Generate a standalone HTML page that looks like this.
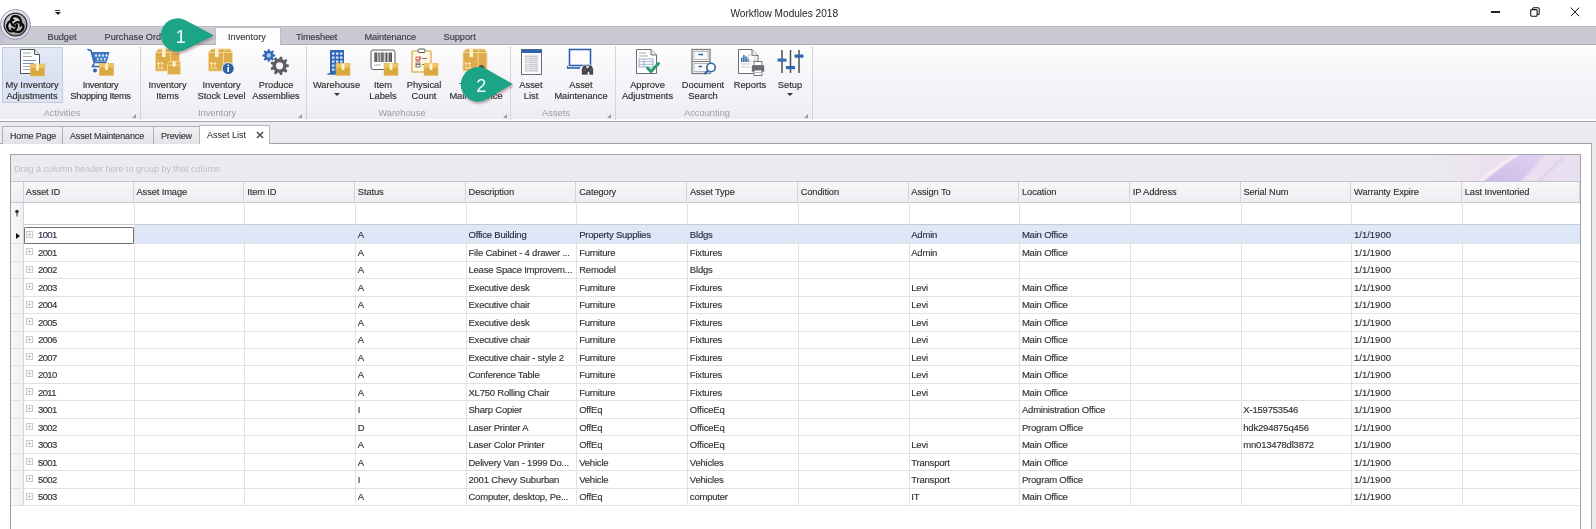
<!DOCTYPE html>
<html><head><meta charset="utf-8">
<style>
*{margin:0;padding:0;box-sizing:border-box}
html{background:#fff}
html,body{width:1596px;height:529px;overflow:hidden;font-family:"Liberation Sans",sans-serif;color:#333;position:relative}
.ct,.ht,.btxt,.rt,.dt span{-webkit-text-stroke:0.15px currentColor}
#wrap{position:absolute;left:0;top:0;width:1596px;height:529px;will-change:transform}
.a{position:absolute}
.t{position:absolute;white-space:nowrap;font-size:9.3px;line-height:11px}
svg{position:absolute;overflow:visible}
#tabbar{left:0;top:26px;width:1596px;height:19px;background:#c9c9d2;border-top:1px solid #b9b9c1;border-bottom:1px solid #aeaeb6}
.rt{position:absolute;top:31.7px;font-size:9.2px;line-height:11px;color:#3c3c44;white-space:nowrap}
#ribbon{left:0;top:45px;width:1596px;height:77px;background:linear-gradient(#fdfdfe,#f4f4f8 50%,#eeeff4 97%,#fafbfd 97%);border-bottom:1px solid #a8a8b0}
#glstrip{left:0;top:104px;width:813px;height:15px;background:linear-gradient(#f2f2f6,#ebebf0)}
.sep{position:absolute;top:46px;width:1px;height:74px;background:#d4d4da}
.glbl{position:absolute;top:108px;font-size:9.3px;line-height:11px;color:#9c9ca4;white-space:nowrap;transform:translateX(-50%)}
.btxt{position:absolute;font-size:9.3px;line-height:10.2px;color:#2e2e2e;text-align:center;white-space:nowrap;transform:translateX(-50%)}
.launch{position:absolute;top:114px;width:0;height:0;border-left:4px solid transparent;border-bottom:4px solid #9a9aa2}
#doctabs{left:0;top:122px;width:1596px;height:22px;background:#ebebef;border-bottom:1px solid #a2a2aa}
.dt{position:absolute;top:126px;height:18px;background:linear-gradient(#f0f0f3,#e3e3e8);border:1px solid #b0b0b8;border-bottom:none;font-size:9px;line-height:15px;color:#3a3a3a;white-space:nowrap}
.dt span{position:absolute;top:2px;letter-spacing:-0.15px}
/* grid */
#docarea{left:0;top:144px;width:1592px;height:385px;background:#fff;border-right:1px solid #a8a8b0}
#grid{left:10px;top:154px;width:1571px;height:375px;border-left:1px solid #9c9ca4;border-top:1px solid #a4a4ac;border-right:1px solid #a2a2aa}
#grp{left:11px;top:155px;width:1569px;height:27px;background:#ebebef;border-bottom:1px solid #c4c4cc}
.hc{position:absolute;top:182px;height:21px;background:linear-gradient(#f7f7f9,#eeeef2);border-right:1px solid #d4d4da;border-bottom:1px solid #c8c8d0}
.ht{position:absolute;top:187px;font-size:9.3px;line-height:11px;color:#333;white-space:nowrap;letter-spacing:-0.1px}
.vl{position:absolute;width:1px;background:#e2e2e6}
.hl{position:absolute;height:1px;background:#e0e0e5}
.ct{position:absolute;font-size:9.5px;line-height:11px;color:#333;white-space:nowrap;letter-spacing:-0.2px}
.num{letter-spacing:-0.6px}
.exp{position:absolute;width:7px;height:7px;border:1px solid #c8c8ce;background:#fbfbfc}
.exp:before{content:"";position:absolute;left:1px;top:2px;width:3px;height:1px;background:#c0c0c8}
.exp:after{content:"";position:absolute;left:2px;top:1px;width:1px;height:3px;background:#c0c0c8}
</style></head>
<body><div id="wrap">
<div class="t" style="left:730.5px;top:6.6px;font-size:10.1px;line-height:13px;color:#1e1e1e">Workflow Modules 2018</div>
<!-- window controls -->
<div class="a" style="left:1491px;top:11.4px;width:8.7px;height:1.3px;background:#222"></div>
<svg style="left:1529.5px;top:6.8px" width="10" height="10" viewBox="0 0 10 10"><rect x="0.7" y="2.6" width="6.4" height="6.6" rx="1" fill="none" stroke="#111" stroke-width="1.05"/><path d="M2.6 2.6V1.8a1 1 0 0 1 1-1h4.6a1 1 0 0 1 1 1v4.6a1 1 0 0 1-1 1h-1" fill="none" stroke="#111" stroke-width="1.05"/></svg>
<svg style="left:1569.5px;top:6.8px" width="10" height="10" viewBox="0 0 10 10"><path d="M0.8 0.6L9.2 9.2M9.2 0.6L0.8 9.2" stroke="#111" stroke-width="1"/></svg>
<!-- QAT arrow -->
<div class="a" style="left:55px;top:10px;width:5px;height:1px;background:#333"></div>
<div class="a" style="left:54.5px;top:12px;width:0;height:0;border-left:3px solid transparent;border-right:3px solid transparent;border-top:3.5px solid #222"></div>

<div id="tabbar" class="a"></div>
<div class="rt" style="left:47.5px">Budget</div>
<div class="rt" style="left:104.5px">Purchase Orders</div>
<div class="a" style="left:215px;top:27px;width:66px;height:19px;background:linear-gradient(#fbfbfc,#fff);border:1px solid #bcbcc4;border-bottom:none"></div>
<div class="rt" style="left:228px">Inventory</div>
<div class="rt" style="left:296px;letter-spacing:-0.15px">Timesheet</div>
<div class="rt" style="left:364.5px;letter-spacing:-0.1px">Maintenance</div>
<div class="rt" style="left:443.5px">Support</div>

<!-- logo -->
<div class="a" style="left:0;top:27px;width:8px;height:17px;background:linear-gradient(90deg,#c4bbd6,#c9c9d2)"></div>
<svg style="left:-1px;top:8px" width="33" height="33" viewBox="0 0 32 33">
<defs><radialGradient id="lg1" cx="0.4" cy="0.35" r="0.7"><stop offset="0" stop-color="#e4e4e4"/><stop offset="0.6" stop-color="#b8b8b8"/><stop offset="1" stop-color="#8e8e8e"/></radialGradient>
<linearGradient id="lg0" x1="0" y1="0" x2="1" y2="1"><stop offset="0" stop-color="#f4f2f8"/><stop offset="1" stop-color="#d2cadf"/></linearGradient></defs>
<circle cx="16" cy="16.5" r="15" fill="url(#lg0)" stroke="#9d95ae" stroke-width="1"/>
<circle cx="16" cy="16.5" r="12" fill="#26262a"/>
<circle cx="16" cy="16.5" r="10.8" fill="url(#lg1)"/>
<g transform="translate(15.8 16.8) scale(1.1)" fill="none" stroke="#0a0a0a" stroke-width="2" stroke-linecap="round">
<path d="M-0.5 1.2C-5 0, -5 -7.8, 0 -7.8C4.5 -7.8, 6.5 -3, 4.6 0.8"/>
<path d="M-0.5 1.2C-5 0, -5 -7.8, 0 -7.8C4.5 -7.8, 6.5 -3, 4.6 0.8" transform="rotate(120)"/>
<path d="M-0.5 1.2C-5 0, -5 -7.8, 0 -7.8C4.5 -7.8, 6.5 -3, 4.6 0.8" transform="rotate(240)"/>
</g>
</svg>
<svg width="0" height="0" style="position:absolute">
<defs>
<g id="box">
<rect x="0" y="0.5" width="14" height="12" fill="#d9a841"/>
<rect x="0" y="0.5" width="14" height="4" fill="#efc467"/>
<rect x="0" y="0.5" width="14" height="12" fill="none" stroke="#e6b95a" stroke-width="0.6"/>
<rect x="5.6" y="0.5" width="2.8" height="6.5" fill="#fff4d4"/>
</g>
<g id="bigbox">
<path d="M0.5 4L3.5 0.5H22L24.5 4V22.5H0.5Z" fill="#deac4a" stroke="#f5d99a" stroke-width="0.9"/>
<path d="M0.5 4H24.5" stroke="#f6dca0" stroke-width="0.9"/>
<path d="M17.5 0.5L15.5 4V22.5" fill="none" stroke="#f5d99a" stroke-width="0.9"/>
<rect x="7" y="0.5" width="3.5" height="8" fill="#fff3cf"/>
<path d="M3.5 18V14M2 15.5L3.5 14L5 15.5M7 18V14M5.5 15.5L7 14L8.5 15.5M2 19.5H9" fill="none" stroke="#fff3cf" stroke-width="0.9"/>
</g>
</defs>
</svg>
<div id="ribbon" class="a"></div>
<div id="glstrip" class="a"></div>
<!-- the inventory tab joins ribbon -->
<div class="a" style="left:216px;top:44px;width:64px;height:2px;background:#fefefe"></div>

<!-- separators -->
<div class="sep" style="left:140px"></div>
<div class="sep" style="left:306px"></div>
<div class="sep" style="left:510px"></div>
<div class="sep" style="left:615px"></div>
<div class="sep" style="left:812px"></div>

<!-- pressed button -->
<div class="a" style="left:2px;top:47px;width:61px;height:56px;background:linear-gradient(#e2e8f6,#d9e1f2 60%,#dfe5f3);border:1px solid #c2cade"></div>

<!-- group labels -->
<div class="glbl" style="left:62px">Activities</div>
<div class="glbl" style="left:217px">Inventory</div>
<div class="glbl" style="left:402px">Warehouse</div>
<div class="glbl" style="left:556px">Assets</div>
<div class="glbl" style="left:707px">Accounting</div>
<div class="launch" style="left:132px"></div>
<div class="launch" style="left:298px"></div>
<div class="launch" style="left:503px"></div>
<div class="launch" style="left:607px"></div>
<div class="launch" style="left:804px"></div>

<!-- button texts -->
<div class="btxt" style="left:32px;top:80.4px">My Inventory<br>Adjustments</div>
<div class="btxt" style="left:100.5px;top:80.4px;letter-spacing:-0.3px">Inventory<br>Shopping Items</div>
<div class="btxt" style="left:167.5px;top:80.4px">Inventory<br>Items</div>
<div class="btxt" style="left:221.5px;top:80.4px">Inventory<br>Stock Level</div>
<div class="btxt" style="left:276px;top:80.4px">Produce<br>Assemblies</div>
<div class="btxt" style="left:336.5px;top:80.4px">Warehouse</div>
<div class="a" style="left:333.5px;top:92.5px;width:0;height:0;border-left:3px solid transparent;border-right:3px solid transparent;border-top:3.5px solid #333"></div>
<div class="btxt" style="left:383px;top:80.4px">Item<br>Labels</div>
<div class="btxt" style="left:424px;top:80.4px">Physical<br>Count</div>
<div class="t" style="left:459px;top:80.6px;font-size:9.3px;line-height:10px;color:#2e2e2e">Tool</div>
<div class="btxt" style="left:476px;top:90.6px">Maintenance</div>
<div class="btxt" style="left:531px;top:80.4px">Asset<br>List</div>
<div class="btxt" style="left:581px;top:80.4px">Asset<br>Maintenance</div>
<div class="btxt" style="left:647.5px;top:80.4px">Approve<br>Adjustments</div>
<div class="btxt" style="left:703px;top:80.4px">Document<br>Search</div>
<div class="btxt" style="left:750px;top:80.4px">Reports</div>
<div class="btxt" style="left:790px;top:80.4px">Setup</div>
<div class="a" style="left:787px;top:92.5px;width:0;height:0;border-left:3px solid transparent;border-right:3px solid transparent;border-top:3.5px solid #333"></div>

<!-- icons -->
<!-- My Inventory Adjustments: document + box -->
<svg style="left:20px;top:49px" width="26" height="28" viewBox="0 0 26 28">
<path d="M0.5 0.5H14.5L19.5 5.5V24.5H0.5Z" fill="#fff" stroke="#55565a" stroke-width="1"/>
<path d="M14.5 0.5V5.5H19.5" fill="#e8e8ea" stroke="#55565a" stroke-width="1"/>
<path d="M3 4H11M3 7.5H12M3 11.5H16M3 14.5H14M3 17.5H16M3 20.5H14" stroke="#a9a9ad" stroke-width="1"/>
<path d="M3 11.5H16M3 14.5H14" stroke="#6f8fc0" stroke-width="1"/>
<use href="#box" x="10.5" y="14.5"/>
</svg>
<!-- cart -->
<svg style="left:87px;top:48px" width="28" height="28" viewBox="0 0 28 28">
<path d="M1 1.5L4 2.5L7.2 14.5H19" fill="none" stroke="#2f63ad" stroke-width="1.6" stroke-linecap="round"/>
<path d="M5 4H22.5L20 13.5H7Z" fill="#3a72bf"/>
<g fill="#d5e4f7">
<path d="M9 5.5l1.3 2-1.3 2-1.3-2z"/><path d="M12.5 5.5l1.3 2-1.3 2-1.3-2z"/><path d="M16 5.5l1.3 2-1.3 2-1.3-2z"/><path d="M19.5 5.5l1.3 2-1.3 2-1.3-2z"/>
<path d="M10.8 9.3l1.2 1.8-1.2 1.8-1.2-1.8z"/><path d="M14.3 9.3l1.2 1.8-1.2 1.8-1.2-1.8z"/><path d="M17.8 9.3l1.2 1.8-1.2 1.8-1.2-1.8z"/>
</g>
<path d="M7 15.5L5.5 18.5H14" fill="none" stroke="#2f63ad" stroke-width="1.6"/>
<circle cx="8" cy="22.5" r="2" fill="#2f63ad"/>
<use href="#box" x="12.5" y="15"/>
</svg>
<!-- Inventory Items -->
<svg style="left:155px;top:48px" width="28" height="28" viewBox="0 0 28 28">
<use href="#bigbox" x="0" y="0.5"/>
<path d="M12.5 15.5L14.5 13.5H25.5V26.5H12.5Z" fill="#deac4a" stroke="#f5d99a" stroke-width="0.9"/>
<path d="M12.5 17H25.5" stroke="#f6dca0" stroke-width="0.8"/>
<rect x="17.5" y="13.5" width="3" height="5" fill="#fff3cf"/>
</svg>
<!-- Stock level -->
<svg style="left:208px;top:48px" width="28" height="28" viewBox="0 0 28 28">
<use href="#bigbox" x="0" y="0.5"/>
<circle cx="20.2" cy="20.6" r="6" fill="#2f62a8" stroke="#fff" stroke-width="0.9"/>
<rect x="19.4" y="19" width="1.6" height="5" fill="#fff"/>
<circle cx="20.2" cy="17.3" r="0.9" fill="#fff"/>
</svg>
<!-- Produce Assemblies gears -->
<svg style="left:260px;top:47px" width="30" height="30" viewBox="0 0 30 30">
<g transform="translate(8.8 8.5)">
<path d="M4.46 -1.14L6.32 -1.00L6.32 1.00L4.46 1.14L3.96 2.34L5.18 3.76L3.76 5.18L2.34 3.96L1.14 4.46L1.00 6.32L-1.00 6.32L-1.14 4.46L-2.34 3.96L-3.76 5.18L-5.18 3.76L-3.96 2.34L-4.46 1.14L-6.32 1.00L-6.32 -1.00L-4.46 -1.14L-3.96 -2.34L-5.18 -3.76L-3.76 -5.18L-2.34 -3.96L-1.14 -4.46L-1.00 -6.32L1.00 -6.32L1.14 -4.46L2.34 -3.96L3.76 -5.18L5.18 -3.76L3.96 -2.34Z" fill="#2e66b4"/>
<circle r="2.2" fill="#a9c9ee"/>
</g>
<g transform="translate(19.6 18.8)">
<path d="M6.83 -1.55L9.21 -1.29L9.21 1.29L6.83 1.55L6.23 3.20L7.89 4.93L6.22 6.91L4.23 5.58L2.71 6.45L2.87 8.84L0.32 9.29L-0.34 6.99L-2.07 6.69L-3.48 8.62L-5.73 7.33L-4.76 5.14L-5.88 3.79L-8.21 4.37L-9.10 1.93L-6.94 0.88L-6.94 -0.88L-9.10 -1.93L-8.21 -4.37L-5.88 -3.79L-4.76 -5.14L-5.73 -7.33L-3.48 -8.62L-2.07 -6.69L-0.34 -6.99L0.32 -9.29L2.87 -8.84L2.71 -6.45L4.23 -5.58L6.22 -6.91L7.89 -4.93L6.23 -3.20Z" fill="#5c5d62"/>
<circle r="3.6" fill="#f6f6f8"/>
</g>
</svg>
<!-- Warehouse building -->
<svg style="left:327px;top:49px" width="26" height="28" viewBox="0 0 26 28">
<rect x="3" y="1" width="14" height="24" fill="#2f66b3"/>
<path d="M0.5 25H18" stroke="#2f66b3" stroke-width="1.5"/>
<g fill="#d6e6f8">
<rect x="5" y="3.5" width="2.5" height="2.2"/><rect x="9" y="3.5" width="2.5" height="2.2"/><rect x="13" y="3.5" width="2.5" height="2.2"/>
<rect x="5" y="7.5" width="2.5" height="2.2"/><rect x="9" y="7.5" width="2.5" height="2.2"/><rect x="13" y="7.5" width="2.5" height="2.2"/>
<rect x="5" y="11.5" width="2.5" height="2.2"/><rect x="9" y="11.5" width="2.5" height="2.2"/><rect x="13" y="11.5" width="2.5" height="2.2"/>
<rect x="5" y="15.5" width="2.5" height="2.2"/><rect x="9" y="15.5" width="2.5" height="2.2"/>
<rect x="5" y="19.5" width="2.5" height="2.2"/>
</g>
<use href="#box" x="9" y="14"/>
</svg>
<!-- Item labels barcode -->
<svg style="left:370px;top:49px" width="30" height="28" viewBox="0 0 30 28">
<rect x="1" y="1" width="24" height="19.5" rx="2.2" fill="#fff" stroke="#5a5b60" stroke-width="1"/>
<path d="M4.8 3.5V13M6.6 3.5V13M9.8 3.5V13M13.2 3.5V13M16.6 3.5V13M19.6 3.5V13M21.5 3.5V13" stroke="#222" stroke-width="0.8"/>
<path d="M5.6 3.5V13M8.2 3.5V13M11.4 3.5V13M12.3 3.5V13M15.2 3.5V13M18 3.5V13M20.6 3.5V13" stroke="#555" stroke-width="0.9"/>
<path d="M4.5 16H11" stroke="#777" stroke-width="1" stroke-dasharray="1 0.6"/>
<use href="#box" x="14" y="14"/>
</svg>
<!-- Physical count clipboard -->
<svg style="left:411px;top:48px" width="30" height="29" viewBox="0 0 30 29">
<rect x="1" y="3" width="19" height="21" rx="1" fill="#fff8e6" stroke="#e4b865" stroke-width="1.6"/>
<rect x="7" y="1" width="7" height="3.5" rx="1" fill="#fff" stroke="#58595d" stroke-width="1"/>
<path d="M5 9h4v4h-4z" fill="none" stroke="#c04a4a" stroke-width="0.9"/>
<path d="M5.5 11l1.5 1.5 3-4" fill="none" stroke="#c04a4a" stroke-width="1"/>
<path d="M11 10.5H16M5 16.5H9M11 16.5H15" stroke="#777" stroke-width="1"/>
<rect x="5" y="15" width="4" height="4" fill="none" stroke="#666" stroke-width="0.9"/>
<use href="#box" x="13" y="15"/>
</svg>
<!-- Tool maintenance big boxes -->
<svg style="left:462px;top:48px" width="28" height="28" viewBox="0 0 28 28">
<use href="#bigbox" x="0.5" y="0.5"/>
<path d="M16 20l2-3h3l2 3v3h-7z" fill="#555"/>
</svg>
<!-- Asset List -->
<svg style="left:521px;top:49px" width="22" height="27" viewBox="0 0 22 27">
<rect x="0.5" y="0.5" width="20" height="25" fill="#fbfbfc" stroke="#6b6c72" stroke-width="1"/>
<rect x="0.5" y="0.5" width="20" height="3.5" fill="#2f64ad"/>
<rect x="4" y="6.5" width="13" height="16" fill="#c6c7cb"/>
<path d="M4 8.5H17M4 10.5H17M4 12.5H17M4 14.5H17M4 16.5H17M4 18.5H17M4 20.5H17" stroke="#f4f4f6" stroke-width="0.8"/>
<path d="M7 6.5V22.5" stroke="#f4f4f6" stroke-width="0.8"/>
</svg>
<!-- Asset Maintenance monitor -->
<svg style="left:566px;top:48px" width="32" height="30" viewBox="0 0 32 30">
<rect x="3.5" y="1.5" width="21" height="16" fill="#fdfdfe" stroke="#2e62ad" stroke-width="1.6"/>
<path d="M1 20H14" stroke="#2e62ad" stroke-width="1.6"/>
<path d="M1.5 20v-2" stroke="#2e62ad" stroke-width="1.2"/>
<path d="M15.5 27v-6l2-4h2.5l1 3h1l1-3h2.5l2 4v6h-4.5v-3h-1v3z" fill="#45464b" stroke="#fff" stroke-width="0.6"/>
<path d="M17.5 22H20M24 22H26.5" stroke="#888" stroke-width="0.8"/>
</svg>
<!-- Approve Adjustments -->
<svg style="left:636px;top:48px" width="28" height="28" viewBox="0 0 28 28">
<path d="M0.5 1.5H15L20.5 7V25.5H0.5Z" fill="#fff" stroke="#6c6d72" stroke-width="1"/>
<path d="M15 1.5V7H20.5" fill="#ececee" stroke="#6c6d72" stroke-width="1"/>
<path d="M3 5H10M3 8H12" stroke="#a9a9ad" stroke-width="1"/>
<rect x="3" y="11" width="14" height="8" fill="#fff" stroke="#8fa6c8" stroke-width="0.9"/>
<path d="M3 13.7H17M3 16.3H17M8 11V19" stroke="#8fa6c8" stroke-width="0.8"/>
<path d="M11.5 20l3.5 3.5 7.5-8" fill="none" stroke="#2e9b6e" stroke-width="3" stroke-linecap="round"/>
</svg>
<!-- Document Search -->
<svg style="left:691px;top:48px" width="28" height="28" viewBox="0 0 28 28">
<rect x="1" y="1.5" width="18" height="24" fill="#fafafb" stroke="#7b7c80" stroke-width="1.3"/>
<path d="M1 13.5H19" stroke="#7b7c80" stroke-width="1.1"/>
<rect x="3" y="3.5" width="14" height="8" fill="none" stroke="#a9aaae" stroke-width="0.8"/>
<rect x="3" y="15.5" width="14" height="8" fill="none" stroke="#a9aaae" stroke-width="0.8"/>
<path d="M7.5 6.5H12M7.5 18.5H11" stroke="#2f62a8" stroke-width="1.6"/>
<circle cx="20" cy="19.5" r="4.2" fill="#fff" stroke="#2f62a8" stroke-width="1.6"/>
<path d="M17 22.5L13.5 26" stroke="#2f62a8" stroke-width="2"/>
</svg>
<!-- Reports -->
<svg style="left:738px;top:48px" width="30" height="29" viewBox="0 0 30 29">
<path d="M0.5 1.5H14L20 7.5V25.5H0.5Z" fill="#fff" stroke="#6c6d72" stroke-width="1"/>
<path d="M14 1.5V7.5H20" fill="#ececee" stroke="#6c6d72" stroke-width="1"/>
<path d="M3.8 14V9.5M5.9 14V7M8 14V8.5M10.1 14V10.5" stroke="#2f62a8" stroke-width="1.5"/>
<path d="M10 7H17V13H10ZM3 16H13M3 19H12" fill="none" stroke="#b8b9bd" stroke-width="0.8"/>
<rect x="13.5" y="17" width="13" height="7" rx="1" fill="#6b6c70" stroke="#fff" stroke-width="0.6"/>
<rect x="16" y="13.5" width="8" height="4" fill="#fff" stroke="#6b6c70" stroke-width="0.9"/>
<rect x="16" y="22" width="8" height="5.5" fill="#fff" stroke="#6b6c70" stroke-width="0.9"/>
<path d="M17 24.5h6" stroke="#999" stroke-width="0.7"/>
</svg>
<!-- Setup sliders -->
<svg style="left:776px;top:48px" width="30" height="28" viewBox="0 0 30 28">
<path d="M6 2V25M14.5 2V25M23 2V25" stroke="#4f4b48" stroke-width="1.5"/>
<rect x="1.5" y="10.5" width="9" height="3.2" fill="#3570b8"/>
<rect x="10" y="18" width="9" height="3.2" fill="#2f64ad"/>
<rect x="18.5" y="6.5" width="9" height="3.2" fill="#2f64ad"/>
</svg>
<div id="doctabs" class="a"></div>
<div class="dt" style="left:2px;width:61px"><span style="left:7px">Home Page</span></div>
<div class="dt" style="left:62px;width:92px"><span style="left:7px">Asset Maintenance</span></div>
<div class="dt" style="left:153px;width:47px"><span style="left:7px">Preview</span></div>
<div class="a" style="left:199px;top:125px;width:71px;height:20px;background:#fff;border:1px solid #b4b4bc;border-bottom:none"></div>
<div class="t" style="left:207px;top:129.8px;font-size:9px;color:#222">Asset List</div>
<svg style="left:256px;top:131px" width="8" height="8" viewBox="0 0 8 8"><path d="M1 1L7 7M7 1L1 7" stroke="#555" stroke-width="1.7"/></svg>
<div id="docarea" class="a"></div>
<div class="a" style="left:1592px;top:143px;width:4px;height:386px;background:#ebebef"></div>
<div id="grid" class="a"></div>
<div id="grp" class="a"></div>
<svg style="left:1400px;top:155px" width="180" height="26" viewBox="0 0 180 26">
<defs><linearGradient id="sw0" x1="0" x2="1"><stop offset="0" stop-color="#ebebef" stop-opacity="0"/><stop offset="0.5" stop-color="#ece0ef"/><stop offset="1" stop-color="#e8dff0"/></linearGradient>
<linearGradient id="sw1" x1="0" x2="1" y1="1" y2="0"><stop offset="0" stop-color="#c9b6e8"/><stop offset="1" stop-color="#e0d2f2"/></linearGradient>
<filter id="swb" x="-10%" y="-30%" width="120%" height="160%"><feGaussianBlur stdDeviation="0.9"/></filter>
<clipPath id="swc"><rect x="0" y="0" width="180" height="26"/></clipPath></defs>
<rect x="0" y="0" width="180" height="26" fill="url(#sw0)"/>
<g clip-path="url(#swc)"><g filter="url(#swb)">
<path d="M82 27C96 17 108 6 120 -1H146C138 8 130 17 120 27Z" fill="url(#sw1)" opacity="0.9"/>
<path d="M80 27C94 16 106 5 119 -1" stroke="#faf6fd" stroke-width="2.2" fill="none"/>
<path d="M137 27C147 19 155 11 163 3" stroke="#d4c4ec" stroke-width="1.2" fill="none"/>
</g></g>
</svg>
<div class="t" style="left:14px;top:164px;font-size:9px;color:#bdbdc5">Drag a column header here to group by that column</div>
<div class="hc" style="left:11px;width:13px;border-right:1px solid #d0d0d6"></div>
<div class="hc" style="left:23.00px;width:110.69px"></div>
<div class="ht" style="left:25.80px">Asset ID</div>
<div class="hc" style="left:133.69px;width:110.69px"></div>
<div class="ht" style="left:136.49px">Asset Image</div>
<div class="hc" style="left:244.38px;width:110.69px"></div>
<div class="ht" style="left:247.18px">Item ID</div>
<div class="hc" style="left:355.07px;width:110.69px"></div>
<div class="ht" style="left:357.87px">Status</div>
<div class="hc" style="left:465.76px;width:110.69px"></div>
<div class="ht" style="left:468.56px">Description</div>
<div class="hc" style="left:576.45px;width:110.69px"></div>
<div class="ht" style="left:579.25px">Category</div>
<div class="hc" style="left:687.14px;width:110.69px"></div>
<div class="ht" style="left:689.94px">Asset Type</div>
<div class="hc" style="left:797.83px;width:110.69px"></div>
<div class="ht" style="left:800.63px">Condition</div>
<div class="hc" style="left:908.52px;width:110.69px"></div>
<div class="ht" style="left:911.32px">Assign To</div>
<div class="hc" style="left:1019.21px;width:110.69px"></div>
<div class="ht" style="left:1022.01px">Location</div>
<div class="hc" style="left:1129.90px;width:110.69px"></div>
<div class="ht" style="left:1132.70px">IP Address</div>
<div class="hc" style="left:1240.59px;width:110.69px"></div>
<div class="ht" style="left:1243.39px">Serial Num</div>
<div class="hc" style="left:1351.28px;width:110.69px"></div>
<div class="ht" style="left:1354.08px">Warranty Expire</div>
<div class="hc" style="left:1461.97px;width:118.03px"></div>
<div class="ht" style="left:1464.77px">Last Inventoried</div>
<div class="a" style="left:23px;top:182px;width:1px;height:21px;background:#d0d0d6"></div>
<div class="a" style="left:11px;top:224px;width:1569px;height:1px;background:#c9c9d0"></div>
<div class="a" style="left:11px;top:203px;width:13px;height:302.75px;background:linear-gradient(90deg,#f8f8fa,#f1f1f4);border-right:1px solid #d4d4da"></div>
<svg style="left:14px;top:209px" width="6" height="8" viewBox="0 0 6 8"><circle cx="3" cy="2.5" r="1.8" fill="#333"/><path d="M3 4V7.5" stroke="#333" stroke-width="1"/></svg>
<div class="a" style="left:133.69px;top:225px;width:1446.31px;height:18.5px;background:#dde7f7"></div>
<div class="vl" style="left:133.69px;top:202px;height:303.75px"></div>
<div class="vl" style="left:244.38px;top:202px;height:303.75px"></div>
<div class="vl" style="left:355.07px;top:202px;height:303.75px"></div>
<div class="vl" style="left:465.76px;top:202px;height:303.75px"></div>
<div class="vl" style="left:576.45px;top:202px;height:303.75px"></div>
<div class="vl" style="left:687.14px;top:202px;height:303.75px"></div>
<div class="vl" style="left:797.83px;top:202px;height:303.75px"></div>
<div class="vl" style="left:908.52px;top:202px;height:303.75px"></div>
<div class="vl" style="left:1019.21px;top:202px;height:303.75px"></div>
<div class="vl" style="left:1129.90px;top:202px;height:303.75px"></div>
<div class="vl" style="left:1240.59px;top:202px;height:303.75px"></div>
<div class="vl" style="left:1351.28px;top:202px;height:303.75px"></div>
<div class="vl" style="left:1461.97px;top:202px;height:303.75px"></div>
<div class="hl" style="left:11px;top:243.20px;width:1569px"></div>
<div class="hl" style="left:11px;top:260.67px;width:1569px"></div>
<div class="hl" style="left:11px;top:278.14px;width:1569px"></div>
<div class="hl" style="left:11px;top:295.61px;width:1569px"></div>
<div class="hl" style="left:11px;top:313.08px;width:1569px"></div>
<div class="hl" style="left:11px;top:330.55px;width:1569px"></div>
<div class="hl" style="left:11px;top:348.02px;width:1569px"></div>
<div class="hl" style="left:11px;top:365.49px;width:1569px"></div>
<div class="hl" style="left:11px;top:382.96px;width:1569px"></div>
<div class="hl" style="left:11px;top:400.43px;width:1569px"></div>
<div class="hl" style="left:11px;top:417.90px;width:1569px"></div>
<div class="hl" style="left:11px;top:435.37px;width:1569px"></div>
<div class="hl" style="left:11px;top:452.84px;width:1569px"></div>
<div class="hl" style="left:11px;top:470.31px;width:1569px"></div>
<div class="hl" style="left:11px;top:487.78px;width:1569px"></div>
<div class="hl" style="left:11px;top:505.25px;width:1569px"></div>
<div class="a" style="left:23.5px;top:227px;width:110.5px;height:17px;background:#fff;border:1px solid #6e6e74;border-radius:1px"></div>
<div class="a" style="left:16px;top:232.6px;width:0;height:0;border-top:3.5px solid transparent;border-bottom:3.5px solid transparent;border-left:4px solid #111"></div>
<div class="exp" style="left:25.8px;top:230.70px"></div>
<div class="ct num" style="left:38px;top:229.40px;color:#2a2f44">1001</div>
<div class="ct" style="left:357.77px;top:229.40px;color:#2a2f44">A</div>
<div class="ct" style="left:468.46px;top:229.40px;color:#2a2f44">Office Building</div>
<div class="ct" style="left:579.15px;top:229.40px;color:#2a2f44">Property Supplies</div>
<div class="ct" style="left:689.84px;top:229.40px;color:#2a2f44">Bldgs</div>
<div class="ct" style="left:911.22px;top:229.40px;color:#2a2f44">Admin</div>
<div class="ct" style="left:1021.91px;top:229.40px;color:#2a2f44">Main Office</div>
<div class="ct" style="left:1353.98px;letter-spacing:0;top:229.40px;color:#2a2f44">1/1/1900</div>
<div class="exp" style="left:25.8px;top:248.17px"></div>
<div class="ct num" style="left:38px;top:246.87px;color:#333">2001</div>
<div class="ct" style="left:357.77px;top:246.87px;color:#333">A</div>
<div class="ct" style="left:468.46px;top:246.87px;color:#333">File Cabinet - 4 drawer ...</div>
<div class="ct" style="left:579.15px;top:246.87px;color:#333">Furniture</div>
<div class="ct" style="left:689.84px;top:246.87px;color:#333">Fixtures</div>
<div class="ct" style="left:911.22px;top:246.87px;color:#333">Admin</div>
<div class="ct" style="left:1021.91px;top:246.87px;color:#333">Main Office</div>
<div class="ct" style="left:1353.98px;letter-spacing:0;top:246.87px;color:#333">1/1/1900</div>
<div class="exp" style="left:25.8px;top:265.64px"></div>
<div class="ct num" style="left:38px;top:264.34px;color:#333">2002</div>
<div class="ct" style="left:357.77px;top:264.34px;color:#333">A</div>
<div class="ct" style="left:468.46px;top:264.34px;color:#333">Lease Space Improvem...</div>
<div class="ct" style="left:579.15px;top:264.34px;color:#333">Remodel</div>
<div class="ct" style="left:689.84px;top:264.34px;color:#333">Bldgs</div>
<div class="ct" style="left:1353.98px;letter-spacing:0;top:264.34px;color:#333">1/1/1900</div>
<div class="exp" style="left:25.8px;top:283.11px"></div>
<div class="ct num" style="left:38px;top:281.81px;color:#333">2003</div>
<div class="ct" style="left:357.77px;top:281.81px;color:#333">A</div>
<div class="ct" style="left:468.46px;top:281.81px;color:#333">Executive desk</div>
<div class="ct" style="left:579.15px;top:281.81px;color:#333">Furniture</div>
<div class="ct" style="left:689.84px;top:281.81px;color:#333">Fixtures</div>
<div class="ct" style="left:911.22px;top:281.81px;color:#333">Levi</div>
<div class="ct" style="left:1021.91px;top:281.81px;color:#333">Main Office</div>
<div class="ct" style="left:1353.98px;letter-spacing:0;top:281.81px;color:#333">1/1/1900</div>
<div class="exp" style="left:25.8px;top:300.58px"></div>
<div class="ct num" style="left:38px;top:299.28px;color:#333">2004</div>
<div class="ct" style="left:357.77px;top:299.28px;color:#333">A</div>
<div class="ct" style="left:468.46px;top:299.28px;color:#333">Executive chair</div>
<div class="ct" style="left:579.15px;top:299.28px;color:#333">Furniture</div>
<div class="ct" style="left:689.84px;top:299.28px;color:#333">Fixtures</div>
<div class="ct" style="left:911.22px;top:299.28px;color:#333">Levi</div>
<div class="ct" style="left:1021.91px;top:299.28px;color:#333">Main Office</div>
<div class="ct" style="left:1353.98px;letter-spacing:0;top:299.28px;color:#333">1/1/1900</div>
<div class="exp" style="left:25.8px;top:318.05px"></div>
<div class="ct num" style="left:38px;top:316.75px;color:#333">2005</div>
<div class="ct" style="left:357.77px;top:316.75px;color:#333">A</div>
<div class="ct" style="left:468.46px;top:316.75px;color:#333">Executive desk</div>
<div class="ct" style="left:579.15px;top:316.75px;color:#333">Furniture</div>
<div class="ct" style="left:689.84px;top:316.75px;color:#333">Fixtures</div>
<div class="ct" style="left:911.22px;top:316.75px;color:#333">Levi</div>
<div class="ct" style="left:1021.91px;top:316.75px;color:#333">Main Office</div>
<div class="ct" style="left:1353.98px;letter-spacing:0;top:316.75px;color:#333">1/1/1900</div>
<div class="exp" style="left:25.8px;top:335.52px"></div>
<div class="ct num" style="left:38px;top:334.22px;color:#333">2006</div>
<div class="ct" style="left:357.77px;top:334.22px;color:#333">A</div>
<div class="ct" style="left:468.46px;top:334.22px;color:#333">Executive chair</div>
<div class="ct" style="left:579.15px;top:334.22px;color:#333">Furniture</div>
<div class="ct" style="left:689.84px;top:334.22px;color:#333">Fixtures</div>
<div class="ct" style="left:911.22px;top:334.22px;color:#333">Levi</div>
<div class="ct" style="left:1021.91px;top:334.22px;color:#333">Main Office</div>
<div class="ct" style="left:1353.98px;letter-spacing:0;top:334.22px;color:#333">1/1/1900</div>
<div class="exp" style="left:25.8px;top:352.99px"></div>
<div class="ct num" style="left:38px;top:351.69px;color:#333">2007</div>
<div class="ct" style="left:357.77px;top:351.69px;color:#333">A</div>
<div class="ct" style="left:468.46px;top:351.69px;color:#333">Executive chair - style 2</div>
<div class="ct" style="left:579.15px;top:351.69px;color:#333">Furniture</div>
<div class="ct" style="left:689.84px;top:351.69px;color:#333">Fixtures</div>
<div class="ct" style="left:911.22px;top:351.69px;color:#333">Levi</div>
<div class="ct" style="left:1021.91px;top:351.69px;color:#333">Main Office</div>
<div class="ct" style="left:1353.98px;letter-spacing:0;top:351.69px;color:#333">1/1/1900</div>
<div class="exp" style="left:25.8px;top:370.46px"></div>
<div class="ct num" style="left:38px;top:369.16px;color:#333">2010</div>
<div class="ct" style="left:357.77px;top:369.16px;color:#333">A</div>
<div class="ct" style="left:468.46px;top:369.16px;color:#333">Conference Table</div>
<div class="ct" style="left:579.15px;top:369.16px;color:#333">Furniture</div>
<div class="ct" style="left:689.84px;top:369.16px;color:#333">Fixtures</div>
<div class="ct" style="left:911.22px;top:369.16px;color:#333">Levi</div>
<div class="ct" style="left:1021.91px;top:369.16px;color:#333">Main Office</div>
<div class="ct" style="left:1353.98px;letter-spacing:0;top:369.16px;color:#333">1/1/1900</div>
<div class="exp" style="left:25.8px;top:387.93px"></div>
<div class="ct num" style="left:38px;top:386.63px;color:#333">2011</div>
<div class="ct" style="left:357.77px;top:386.63px;color:#333">A</div>
<div class="ct" style="left:468.46px;top:386.63px;color:#333">XL750 Rolling Chair</div>
<div class="ct" style="left:579.15px;top:386.63px;color:#333">Furniture</div>
<div class="ct" style="left:689.84px;top:386.63px;color:#333">Fixtures</div>
<div class="ct" style="left:911.22px;top:386.63px;color:#333">Levi</div>
<div class="ct" style="left:1021.91px;top:386.63px;color:#333">Main Office</div>
<div class="ct" style="left:1353.98px;letter-spacing:0;top:386.63px;color:#333">1/1/1900</div>
<div class="exp" style="left:25.8px;top:405.40px"></div>
<div class="ct num" style="left:38px;top:404.10px;color:#333">3001</div>
<div class="ct" style="left:357.77px;top:404.10px;color:#333">I</div>
<div class="ct" style="left:468.46px;top:404.10px;color:#333">Sharp Copier</div>
<div class="ct" style="left:579.15px;top:404.10px;color:#333">OffEq</div>
<div class="ct" style="left:689.84px;top:404.10px;color:#333">OfficeEq</div>
<div class="ct" style="left:1021.91px;top:404.10px;color:#333">Administration Office</div>
<div class="ct" style="left:1243.29px;top:404.10px;color:#333">X-159753546</div>
<div class="ct" style="left:1353.98px;letter-spacing:0;top:404.10px;color:#333">1/1/1900</div>
<div class="exp" style="left:25.8px;top:422.87px"></div>
<div class="ct num" style="left:38px;top:421.57px;color:#333">3002</div>
<div class="ct" style="left:357.77px;top:421.57px;color:#333">D</div>
<div class="ct" style="left:468.46px;top:421.57px;color:#333">Laser Printer A</div>
<div class="ct" style="left:579.15px;top:421.57px;color:#333">OffEq</div>
<div class="ct" style="left:689.84px;top:421.57px;color:#333">OfficeEq</div>
<div class="ct" style="left:1021.91px;top:421.57px;color:#333">Program Office</div>
<div class="ct" style="left:1243.29px;top:421.57px;color:#333">hdk294875q456</div>
<div class="ct" style="left:1353.98px;letter-spacing:0;top:421.57px;color:#333">1/1/1900</div>
<div class="exp" style="left:25.8px;top:440.34px"></div>
<div class="ct num" style="left:38px;top:439.04px;color:#333">3003</div>
<div class="ct" style="left:357.77px;top:439.04px;color:#333">A</div>
<div class="ct" style="left:468.46px;top:439.04px;color:#333">Laser Color Printer</div>
<div class="ct" style="left:579.15px;top:439.04px;color:#333">OffEq</div>
<div class="ct" style="left:689.84px;top:439.04px;color:#333">OfficeEq</div>
<div class="ct" style="left:911.22px;top:439.04px;color:#333">Levi</div>
<div class="ct" style="left:1021.91px;top:439.04px;color:#333">Main Office</div>
<div class="ct" style="left:1243.29px;top:439.04px;color:#333">mn013478dl3872</div>
<div class="ct" style="left:1353.98px;letter-spacing:0;top:439.04px;color:#333">1/1/1900</div>
<div class="exp" style="left:25.8px;top:457.81px"></div>
<div class="ct num" style="left:38px;top:456.51px;color:#333">5001</div>
<div class="ct" style="left:357.77px;top:456.51px;color:#333">A</div>
<div class="ct" style="left:468.46px;top:456.51px;color:#333">Delivery Van - 1999 Do...</div>
<div class="ct" style="left:579.15px;top:456.51px;color:#333">Vehicle</div>
<div class="ct" style="left:689.84px;top:456.51px;color:#333">Vehicles</div>
<div class="ct" style="left:911.22px;top:456.51px;color:#333">Transport</div>
<div class="ct" style="left:1021.91px;top:456.51px;color:#333">Main Office</div>
<div class="ct" style="left:1353.98px;letter-spacing:0;top:456.51px;color:#333">1/1/1900</div>
<div class="exp" style="left:25.8px;top:475.28px"></div>
<div class="ct num" style="left:38px;top:473.98px;color:#333">5002</div>
<div class="ct" style="left:357.77px;top:473.98px;color:#333">I</div>
<div class="ct" style="left:468.46px;top:473.98px;color:#333">2001 Chevy Suburban</div>
<div class="ct" style="left:579.15px;top:473.98px;color:#333">Vehicle</div>
<div class="ct" style="left:689.84px;top:473.98px;color:#333">Vehicles</div>
<div class="ct" style="left:911.22px;top:473.98px;color:#333">Transport</div>
<div class="ct" style="left:1021.91px;top:473.98px;color:#333">Program Office</div>
<div class="ct" style="left:1353.98px;letter-spacing:0;top:473.98px;color:#333">1/1/1900</div>
<div class="exp" style="left:25.8px;top:492.75px"></div>
<div class="ct num" style="left:38px;top:491.45px;color:#333">5003</div>
<div class="ct" style="left:357.77px;top:491.45px;color:#333">A</div>
<div class="ct" style="left:468.46px;top:491.45px;color:#333">Computer, desktop, Pe...</div>
<div class="ct" style="left:579.15px;top:491.45px;color:#333">OffEq</div>
<div class="ct" style="left:689.84px;top:491.45px;color:#333">computer</div>
<div class="ct" style="left:911.22px;top:491.45px;color:#333">IT</div>
<div class="ct" style="left:1021.91px;top:491.45px;color:#333">Main Office</div>
<div class="ct" style="left:1353.98px;letter-spacing:0;top:491.45px;color:#333">1/1/1900</div>
<svg style="left:0;top:0" width="600" height="130" viewBox="0 0 600 130">
<defs><filter id="csh" x="-30%" y="-30%" width="160%" height="160%"><feGaussianBlur in="SourceAlpha" stdDeviation="1.3"/><feOffset dx="0.5" dy="1.6" result="b"/><feFlood flood-color="#8a4660" flood-opacity="0.45"/><feComposite in2="b" operator="in"/><feMerge><feMergeNode/><feMergeNode in="SourceGraphic"/></feMerge></filter></defs>
<path d="M214.00 35.50L185.46 20.27A16.7 16.7 0 1 0 185.06 49.94Z" fill="#1fa487" filter="url(#csh)"/>
<path d="M512.80 84.10L486.72 69.34A17.3 17.3 0 1 0 486.98 99.31Z" fill="#1fa487" filter="url(#csh)"/>
</svg>
<div class="t" style="left:175.8px;top:27px;font-size:18px;line-height:20px;color:#f4fbf8">1</div>
<div class="t" style="left:476.2px;top:75.5px;font-size:18px;line-height:20px;color:#f4fbf8">2</div>
</div></body></html>
